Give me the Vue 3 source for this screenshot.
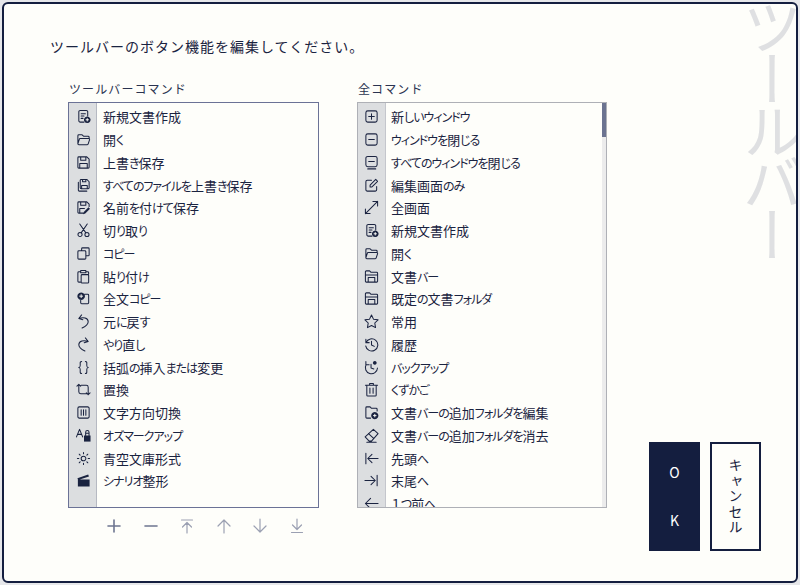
<script setup>
const icons = {
  newdoc: { s: 'M8.500 14H4.500A1.500 1.500 0 0 1 3 12.500V3A1.500 1.500 0 0 1 4.500 1.500h6.500A1.500 1.500 0 0 1 12.500 3v4.500M5.500 5h4.500M5.500 7.500h3M5.500 10h2', f: 'M12 8a3.500 3.500 0 1 0 .01 0z', w: 'M12 9.800v3.400M10.300 11.500h3.400' },
  open: { s: 'M2 12.500V4a1 1 0 0 1 1-1h3.500l1.500 1.500h5a1 1 0 0 1 1 1V7M2 12.500A1 1 0 0 0 3 13.500h9a1 1 0 0 0 1-.8l1.500-4.500a1 1 0 0 0-1-1.200H4.500a1 1 0 0 0-1 .8z' },
  save: { s: 'M3 2h8.500L14 4.500V13a1 1 0 0 1-1 1H3a1 1 0 0 1-1-1V3a1 1 0 0 1 1-1zM5 2v3.500h5.500V2M4 14V9h8v5' },
  saveall: { s: 'M5.500 1.500h6l2.500 2.500v6.500a1 1 0 0 1-1 1h-7.500a1 1 0 0 1-1-1v-8a1 1 0 0 1 1-1zM7 1.500v2.500h3.500v-2.500M6 11.500v-3.500h6v3.500M2.500 4.500v8.500a1 1 0 0 0 1 1h8' },
  saveas: { s: 'M8 14H3a1 1 0 0 1-1-1V3a1 1 0 0 1 1-1h8.500L14 4.500V7M5 2v3.500h5.500V2M4 14V9h5', f: 'M13.300 7.800l1.600 1.600-5 5-2.300.7.700-2.300z' },
  cut: { s: 'M4 1l6.500 9.500M12 1l-6.500 9.500M6.500 12.300a2.200 2.200 0 1 1-4.400 0 2.200 2.200 0 0 1 4.400 0zM13.900 12.300a2.200 2.200 0 1 1-4.400 0 2.200 2.200 0 0 1 4.400 0z' },
  copy: { s: 'M6 5V3a1 1 0 0 1 1-1h6a1 1 0 0 1 1 1v6.500a1 1 0 0 1-1 1h-2.500M3 5h6.500a1 1 0 0 1 1 1v7a1 1 0 0 1-1 1H3a1 1 0 0 1-1-1V6a1 1 0 0 1 1-1z' },
  paste: { s: 'M4.500 3H3a1 1 0 0 0-1 1v9a1 1 0 0 0 1 1h1.500M11 3h1.500a1 1 0 0 1 1 1v1M5 1.500h5.500v2.500H5zM6.500 6h6a1 1 0 0 1 1 1v7a1 1 0 0 1-1 1h-6a1 1 0 0 1-1-1V7a1 1 0 0 1 1-1z' },
  fullcopy: { s: 'M9 3.500h3.500a1 1 0 0 1 1 1v8a1 1 0 0 1-1 1h-6.500a1 1 0 0 1-1-1v-2.500', f: 'M5.500 1.500a4 4 0 1 0 .01 0z', w: 'M5.500 3.500v4M3.500 5.500h4' },
  undo: { s: 'M6 1l-3 3.800 4.300 1.300M3.200 4.900c4.300-1.800 9.800-.8 9.800 3.300 0 3.200-3 5-6.500 6.800' },
  redo: { s: 'M10 1l3 3.800-4.300 1.300M12.800 4.900c-4.300-1.800-9.800-.8-9.800 3.300 0 3.200 3 5 6.500 6.800' },
  braces: { s: 'M6 1.500C4 1.500 4.500 3.500 4.500 5.500S4.500 7.500 3 8c1.500.5 1.500.5 1.500 2.500s-.5 4 1.500 4M10 1.500c2 0 1.500 2 1.500 4s0 2 1.500 2.500c-1.500.5-1.500.5-1.500 2.500s.5 4-1.500 4' },
  crop: { s: 'M1 4.500l2-2 2 2M3 2.500v8a2 2 0 0 0 2 2h6.500M5.500 3.500H11a2 2 0 0 1 2 2v8M11 11.500l2 2 2-2' },
  direction: { s: 'M3.500 2h9A1.500 1.500 0 0 1 14 3.500v9a1.500 1.500 0 0 1-1.500 1.500h-9A1.500 1.500 0 0 1 2 12.500v-9A1.500 1.500 0 0 1 3.500 2zM5.500 5v6M8 5v6M10.500 5v6' },
  oz: { s: 'M.5 9.500L3.800 1.500l3.300 8M1.700 6.800h4.200M10.300 8V4.500a1.800 1.800 0 0 1 3.600 0V8M10.300 5.500h3.600', f: 'M8.500 8h7v6.500h-7z' },
  sun: { s: 'M10.500 8a2.500 2.500 0 1 1-5 0 2.500 2.500 0 0 1 5 0zM8 1.500v1.500M8 13v1.500M1.500 8H3M13 8h1.500M3.400 3.400l1 1M11.600 11.600l1 1M12.600 3.400l-1 1M4.400 11.600l-1 1' },
  clapper: { f: 'M2 7h12.500v7.500H2zM1.500 5.500L13 1.500l.8 2.200L2.300 7.500z' },
  plusbox: { s: 'M4 2h8a2 2 0 0 1 2 2v8a2 2 0 0 1-2 2H4a2 2 0 0 1-2-2V4a2 2 0 0 1 2-2zM8 5v6M5 8h6' },
  minusbox: { s: 'M4 2h8a2 2 0 0 1 2 2v8a2 2 0 0 1-2 2H4a2 2 0 0 1-2-2V4a2 2 0 0 1 2-2zM5 8h6' },
  minusmulti: { s: 'M4 1.500h8a2 2 0 0 1 2 2v7a2 2 0 0 1-2 2H4a2 2 0 0 1-2-2v-7a2 2 0 0 1 2-2zM5 7h6M4 14.800h8.500' },
  editbox: { s: 'M13.500 9v3.500a1.500 1.500 0 0 1-1.500 1.500H3.500A1.500 1.500 0 0 1 2 12.500V4a1.500 1.500 0 0 1 1.500-1.500H8M6.500 9.500v-2L12.500 1.500l2 2-6 6z' },
  expand: { s: 'M9.500 1.500h5v5M14.500 1.500l-13 13M1.500 9.500v5h5' },
  star: { s: 'M8 1l2.100 4.500 4.900.7-3.500 3.400.8 4.900L8 12.200l-4.300 2.300.8-4.900L1 6.200l4.900-.7z' },
  history: { s: 'M2 2.500v3.500h3.500M2.200 6a6.500 6.500 0 1 1-.4 3.500M8 4.500v4l3 1.500' },
  backup: { s: 'M2 1.500v3.500h3.500M2.200 5a6.500 6.500 0 1 0 12.200 3.500M7.500 4.500v4l3 1', f: 'M11.500 1a2 2 0 1 0 .01 0z' },
  trash: { s: 'M1.500 3.500h13M6 3.500V1.500h4v2M3 3.500V14a1 1 0 0 0 1 1h8a1 1 0 0 0 1-1V3.500M6.300 6.500v5.500M9.700 6.500v5.500' },
  folderplus: { s: 'M7 14H3a1 1 0 0 1-1-1V3a1 1 0 0 1 1-1h3.500l1.500 1.500H13a1 1 0 0 1 1 1v2', f: 'M11.500 7.500a3.800 3.800 0 1 0 .01 0z', w: 'M11.500 9.500v3.600M9.700 11.300h3.600' },
  eraser: { s: 'M10 1.500l5 4.500-7 8H5.500L1.200 9.500zM4.800 6l5.200 4.700M3 15.200h10' },
  folderdoc: { s: 'M1.500 13V3a1 1 0 0 1 1-1h3.500l1.500 1.500h6a1 1 0 0 1 1 1V13a1 1 0 0 1-1 1h-11a1 1 0 0 1-1-1zM4.500 14V9h7v5M1.500 6.500h13' },
  first: { s: 'M2 2.500v11M15 8H4M8.500 3.500L4 8l4.500 4.500' },
  last: { s: 'M14 2.500v11M1 8h11M7.500 3.500L12 8l-4.500 4.500' },
  left: { s: 'M15 8H1.500M7 2.500L1.500 8 7 13.500' },
  add: { s: 'M8 2v12M2 8h12' },
  remove: { s: 'M2 8h12' },
  top: { s: 'M2.500 2h11M8 15V4.500M3.500 9L8 4.500 12.500 9' },
  up: { s: 'M8 15V2M2 8l6-6 6 6' },
  down: { s: 'M8 1v13M2 8l6 6 6-6' },
  bottom: { s: 'M2.500 14.500h11M8 1v10.500M3.500 7L8 11.500 12.500 7' }
}

const toolbarItems = [
  ['newdoc', '新規文書作成'], ['open', '開く'], ['save', '上書き保存'],
  ['saveall', 'すべてのファイルを上書き保存'], ['saveas', '名前を付けて保存'], ['cut', '切り取り'],
  ['copy', 'コピー'], ['paste', '貼り付け'], ['fullcopy', '全文コピー'], ['undo', '元に戻す'],
  ['redo', 'やり直し'], ['braces', '括弧の挿入または変更'], ['crop', '置換'], ['direction', '文字方向切換'],
  ['oz', 'オズマークアップ'], ['sun', '青空文庫形式'], ['clapper', 'シナリオ整形']
]
const allItems = [
  ['plusbox', '新しいウィンドウ'], ['minusbox', 'ウィンドウを閉じる'], ['minusmulti', 'すべてのウィンドウを閉じる'],
  ['editbox', '編集画面のみ'], ['expand', '全画面'], ['newdoc', '新規文書作成'], ['open', '開く'],
  ['folderdoc', '文書バー'], ['folderdoc', '既定の文書フォルダ'], ['star', '常用'], ['history', '履歴'],
  ['backup', 'バックアップ'], ['trash', 'くずかご'], ['folderplus', '文書バーの追加フォルダを編集'],
  ['eraser', '文書バーの追加フォルダを消去'], ['first', '先頭へ'], ['last', '末尾へ'], ['left', '１つ前へ']
]
const tools = [
  ['add', 'strong'], ['remove', 'strong'], ['top', 'dim'], ['up', 'dim'], ['down', 'dim'], ['bottom', 'dim']
]
const isKana = (s) => /^[\u3040-\u30ff]/.test(s)
const runs = (s) => s.match(/[\u3040-\u30ff]+|[^\u3040-\u30ff]+/g)
</script>

<template>
  <div class="window">
    <div class="watermark">ツールバー</div>
    <p class="title">ツールバーのボタン機能を編集してください。</p>
    <div class="content">
      <section class="col">
        <h2 class="label">ツールバーコマンド</h2>
        <div class="list focused">
          <div class="rows">
            <div v-for="item in toolbarItems" :key="item[1]" class="row">
              <span class="cell">
                <svg class="icon" viewBox="0 0 16 16">
                  <path v-if="icons[item[0]].f" class="fill" :d="icons[item[0]].f" />
                  <path v-if="icons[item[0]].s" class="stroke" :d="icons[item[0]].s" />
                  <path v-if="icons[item[0]].w" class="knock" :d="icons[item[0]].w" />
                </svg>
              </span>
              <span class="text"><span v-for="(r, i) in runs(item[1])" :key="i" :class="{ kana: isKana(r) }">{{ r }}</span></span>
            </div>
          </div>
        </div>
        <div class="tools">
          <span v-for="t in tools" :key="t[0]" class="tool" :class="t[1]">
            <svg class="tool-icon" viewBox="0 0 16 16"><path class="stroke" :d="icons[t[0]].s" /></svg>
          </span>
        </div>
      </section>
      <section class="col second">
        <h2 class="label">全コマンド</h2>
        <div class="list plain">
          <div class="rows">
            <div v-for="item in allItems" :key="item[1]" class="row">
              <span class="cell">
                <svg class="icon" viewBox="0 0 16 16">
                  <path v-if="icons[item[0]].f" class="fill" :d="icons[item[0]].f" />
                  <path v-if="icons[item[0]].s" class="stroke" :d="icons[item[0]].s" />
                  <path v-if="icons[item[0]].w" class="knock" :d="icons[item[0]].w" />
                </svg>
              </span>
              <span class="text"><span v-for="(r, i) in runs(item[1])" :key="i" :class="{ kana: isKana(r) }">{{ r }}</span></span>
            </div>
          </div>
          <div class="scrollbar"><div class="thumb"></div></div>
        </div>
      </section>
      <div class="actions">
        <button class="btn ok">OK</button>
        <button class="btn cancel">キャンセル</button>
      </div>
    </div>
  </div>
</template>

<style>
html, body { margin: 0; background: #e6e7ea; }
</style>

<style scoped>
.window {
  position: relative;
  box-sizing: border-box;
  width: 796px;
  height: 581px;
  margin: 2px;
  border: 2px solid #141e3f;
  border-radius: 6px;
  background: #fefefa;
  overflow: hidden;
  padding: 32px 35px 0 46px;
  color: #1a2340;
  font-family: "Noto Sans CJK JP", "Noto Sans", sans-serif;
}
.watermark {
  position: absolute;
  top: -7px;
  right: -9px;
  writing-mode: vertical-rl;
  font-size: 60px;
  line-height: 66px;
  letter-spacing: -8px;
  color: #dfe0e2;
}
.title {
  position: relative;
  margin: 0;
  font-size: 14px;
  line-height: 20px;
  letter-spacing: 1px;
}
.content {
  position: relative;
  display: flex;
  height: 471px;
  margin-top: 24px;
  padding-left: 18px;
}
.col { width: 251px; }
.second { margin-left: 38px; width: 250px; }
.label {
  margin: 0 0 4px 1px;
  font-size: 12px;
  font-weight: 400;
  line-height: 18px;
  letter-spacing: 1.100px;
  color: #2a3350;
}
.list {
  box-sizing: border-box;
  display: flex;
  height: 406px;
  overflow: hidden;
  border: 1px solid;
}
.focused {
  border-color: #6b7296;
  background: linear-gradient(90deg, #dcdee0 27px, #b6b9c2 27px, #b6b9c2 28px, transparent 28px);
}
.plain {
  border-color: #aeb0b6;
  background: linear-gradient(90deg, #dcdee0 27px, #c4c6cc 27px, #c4c6cc 28px, transparent 28px);
}
.rows {
  flex: 1;
  min-width: 0;
  padding-top: 2.500px;
}
.row {
  display: flex;
  align-items: center;
  height: 22.750px;
}
.cell {
  display: flex;
  flex: none;
  width: 28px;
  justify-content: center;
}
.plain .cell { width: 27px; }
.icon { width: 15px; height: 15px; }
.stroke {
  fill: none;
  stroke: currentColor;
  stroke-width: 1.100;
  stroke-linecap: round;
  stroke-linejoin: round;
}
.fill { fill: currentColor; }
.knock {
  fill: none;
  stroke: #fefefa;
  stroke-width: 1;
}
.text {
  margin-left: 6px;
  font-size: 13px;
  font-feature-settings: "palt";
  white-space: nowrap;
}
.kana {
  font-size: 12px;
  letter-spacing: -1px;
}
.scrollbar {
  flex: none;
  width: 4px;
  background: #ececec;
}
.thumb {
  height: 34px;
  background: #6b7390;
}
.tools {
  display: flex;
  margin-top: 6px;
  padding-left: 27.700px;
}
.tool {
  display: flex;
  width: 36.600px;
  height: 24px;
  justify-content: center;
  align-items: center;
}
.tool-icon { width: 16px; height: 16px; }
.strong { color: #6d7590; }
.strong .stroke { stroke-width: 1.600; }
.dim { color: #9ba0b2; }
.dim .stroke { stroke-width: 1.200; }
.actions {
  display: flex;
  gap: 10px;
  margin-left: auto;
  align-self: flex-end;
}
.btn {
  box-sizing: border-box;
  width: 51px;
  height: 109px;
  padding: 0;
  border: 2px solid #141e3f;
  border-radius: 0;
  font-family: inherit;
  font-size: 14px;
  writing-mode: vertical-rl;
  text-orientation: upright;
}
.ok {
  background: #141e3f;
  color: #fff;
  letter-spacing: 34px;
  text-indent: 22px;
}
.cancel {
  background: #fefefa;
  color: #1a2340;
  letter-spacing: 1.500px;
}
</style>
